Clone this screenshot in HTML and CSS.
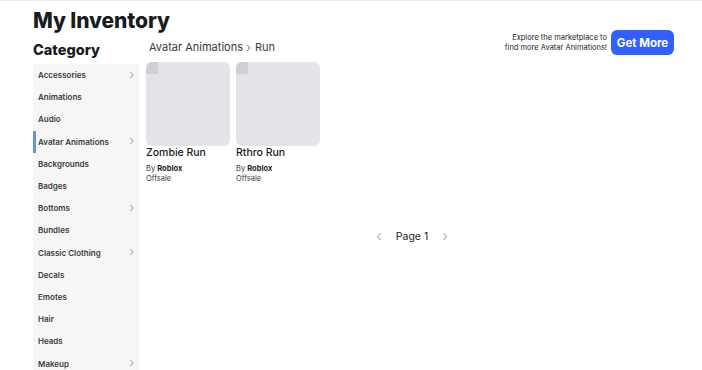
FILE: index.html
```html
<!DOCTYPE html>
<html>
<head>
<meta charset="utf-8">
<link rel="stylesheet" href="styles.css">
</head>
<body>
<div class="topline"></div>
<div class="page">
  <h1 class="title">My Inventory</h1>
  <div class="layout">
    <aside class="side">
      <h2 class="cat-title">Category</h2>
      <ul class="cats">
        <li class="cat">Accessories<span class="chev">&#x203A;</span></li>
        <li class="cat">Animations</li>
        <li class="cat">Audio</li>
        <li class="cat active">Avatar Animations<span class="chev">&#x203A;</span></li>
        <li class="cat">Backgrounds</li>
        <li class="cat">Badges</li>
        <li class="cat">Bottoms<span class="chev">&#x203A;</span></li>
        <li class="cat">Bundles</li>
        <li class="cat">Classic Clothing<span class="chev">&#x203A;</span></li>
        <li class="cat">Decals</li>
        <li class="cat">Emotes</li>
        <li class="cat">Hair</li>
        <li class="cat">Heads</li>
        <li class="cat">Makeup<span class="chev">&#x203A;</span></li>
      </ul>
    </aside>
    <main class="main">
      <div class="head">
        <div class="crumbs">Avatar Animations<span class="crumb-sep">&#x203A;</span>Run</div>
        <div class="promo">
          <p class="promo-text">Explore the marketplace to<br>find more Avatar Animations!</p>
          <button class="btn">Get More</button>
        </div>
      </div>
      <div class="grid">
        <div class="item">
          <div class="thumb"><span class="corner"></span></div>
          <div class="name">Zombie Run</div>
          <div class="by">By <b>Roblox</b></div>
          <div class="price">Offsale</div>
        </div>
        <div class="item">
          <div class="thumb"><span class="corner"></span></div>
          <div class="name">Rthro Run</div>
          <div class="by">By <b>Roblox</b></div>
          <div class="price">Offsale</div>
        </div>
      </div>
      <div class="pager">
        <span class="arrow">&#x2039;</span>
        <span class="page-label">Page 1</span>
        <span class="arrow">&#x203A;</span>
      </div>
    </main>
  </div>
</div>
</body>
</html>
```
FILE: styles.css
```css
* { box-sizing: border-box; }
html, body { margin: 0; padding: 0; background: #fff; }
body {
  font-family: Inter, "Noto Sans", sans-serif;
  color: #1f2123;
  overflow: hidden;
  height: 370px;
}
.topline { height: 1px; background: #ededed; }
.page { padding: 6px 0 0 33px; }
.title {
  margin: 0;
  font-size: 21px;
  font-weight: 800;
  line-height: 27px;
  color: #1a1b1d;
  letter-spacing: -0.1px;
}
.layout { display: flex; margin-top: 7px; }
.side { width: 106px; flex: none; }
.cat-title {
  margin: 0;
  font-size: 14.5px;
  font-weight: 800;
  line-height: 18px;
  color: #1a1b1d;
}
.cats {
  list-style: none;
  margin: 5px 0 0;
  padding: 0;
  background: #f6f6f6;
}
.cat {
  height: 22.2px;
  display: flex;
  align-items: center;
  justify-content: space-between;
  padding: 0 5px 0 5px;
  font-size: 8px;
  font-weight: 600;
  color: #393b3d;
  position: relative;
}
.cat.active::before {
  content: "";
  position: absolute;
  left: 0; top: 0; bottom: 0;
  width: 3px;
  background: #6d8ee8;
}
.chev { font-size: 13px; font-weight: 300; color: #9a9c9e; line-height: 1; margin-top: -2px; }
.main { flex: 1; padding-left: 7px; padding-right: 28px; }
.head { display: flex; justify-content: space-between; align-items: flex-start; height: 38px; margin-top: -17px; }
.crumbs {
  margin-top: 16px;
  padding-left: 3px;
  font-size: 11px;
  color: #393b3d;
  display: flex;
  align-items: center;
}
.crumb-sep { font-size: 13px; color: #8a8c8e; margin: 0 4px 0 3px; line-height: 1; }
.promo { display: flex; align-items: center; gap: 4px; margin-top: 6px; }
.promo-text {
  margin: 0;
  font-size: 7.5px;
  line-height: 10px;
  text-align: right;
  color: #1f2123;
}
.btn {
  border: none;
  background: #335fff;
  color: #fff;
  font-family: inherit;
  font-weight: 700;
  font-size: 11.5px;
  height: 25px;
  width: 63px;
  border-radius: 6px;
  padding: 0;
}
.grid { display: flex; gap: 6px; }
.item { width: 84px; }
.thumb {
  width: 84px;
  height: 84px;
  border-radius: 6px;
  background: #e3e4e8;
  position: relative;
  overflow: hidden;
}
.corner {
  position: absolute;
  left: 0; top: 0;
  width: 12px; height: 12px;
  background: #cfd0d6;
}
.name { font-size: 10.5px; font-weight: 500; margin-top: 0; line-height: 14px; color: #1a1b1d; }
.by { font-size: 7.5px; line-height: 10px; margin-top: 4px; color: #393b3d; }
.by b { font-weight: 700; color: #1f2123; }
.price { font-size: 7.5px; line-height: 10px; color: #393b3d; }
.pager {
  display: flex;
  justify-content: center;
  align-items: center;
  gap: 14px;
  margin-top: 46px;
  padding-left: 4px;
}
.arrow { font-size: 15px; color: #b8babc; line-height: 1; margin-top: -2px; }
.page-label { font-size: 10.5px; color: #1a1b1d; }
```
